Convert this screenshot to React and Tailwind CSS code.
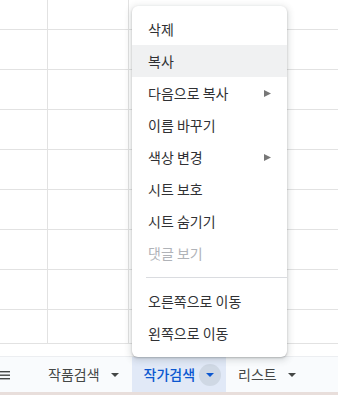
import React from 'react';

const items = [
    { label: '삭제' },
    { label: '복사', active: true },
    { label: '다음으로 복사', sub: true },
    { label: '이름 바꾸기' },
    { label: '색상 변경', sub: true },
    { label: '시트 보호' },
    { label: '시트 숨기기' },
    { label: '댓글 보기', disabled: true },
    { divider: true },
    { label: '오른쪽으로 이동' },
    { label: '왼쪽으로 이동' },
];

function Row({ h }) {
    return (
        <div className={`flex border-b border-[#e2e2e2] ${h}`}>
            <div className="w-[48px] border-r border-[#e2e2e2]"></div>
            <div className="w-[81px] border-r border-[#e2e2e2]"></div>
            <div className="flex-1"></div>
        </div>
    );
}

function Caret({ color }) {
    return (
        <svg width="8" height="4" viewBox="0 0 8 4">
            <path d="M0 0 L8 0 L4 4 Z" fill={color} />
        </svg>
    );
}

export default function App() {
    return (
        <div className="relative w-[338px] h-[395px] overflow-hidden bg-white" style={{ fontFamily: '"Noto Sans CJK KR", "Noto Sans", sans-serif' }}>
            {/* sheet grid */}
            <div className="flex flex-col">
                <Row h="h-[30px]" />
                <Row h="h-[40px]" />
                <Row h="h-[40px]" />
                <Row h="h-[40px]" />
                <Row h="h-[40px]" />
                <Row h="h-[40px]" />
                <Row h="h-[40px]" />
                <Row h="h-[40px]" />
                <Row h="h-[34px]" />
                <div className="h-[12px]"></div>
            </div>

            {/* tab bar */}
            <div className="flex h-[36px] items-center bg-[#f9fbfd] border-t border-[#eceef1] text-[14px] text-[#444746]">
                <div className="w-[36px] h-full flex items-center">
                    <svg width="10" height="10" viewBox="0 0 10 10">
                        <rect x="0" y="1" width="10" height="1.4" fill="#444746" />
                        <rect x="0" y="4.5" width="10" height="1.4" fill="#444746" />
                        <rect x="0" y="8" width="10" height="1.4" fill="#444746" />
                    </svg>
                </div>
                <div className="flex items-center h-full pl-3 pr-[6px] gap-[4px]">
                    <span>작품검색</span>
                    <span className="w-[22px] h-[22px] flex items-center justify-center"><Caret color="#444746" /></span>
                </div>
                <div className="flex items-center h-full pl-3 pr-[5px] gap-[4px] bg-[#e1e9f7] text-[#0b57d0] font-medium">
                    <span>작가검색</span>
                    <span className="w-[22px] h-[22px] rounded-full bg-[#cfd8e4] flex items-center justify-center"><Caret color="#0b57d0" /></span>
                </div>
                <div className="flex items-center h-full pl-3 gap-[4px]">
                    <span>리스트</span>
                    <span className="w-[22px] h-[22px] flex items-center justify-center"><Caret color="#444746" /></span>
                </div>
            </div>
            <div className="h-[3px] bg-[#e8dedb]"></div>

            {/* context menu */}
            <div className="absolute left-[132px] top-[6px] w-[155px] bg-white rounded-[6px] pt-[7px] pb-[8px] shadow-[0_2px_6px_2px_rgba(60,64,67,0.15),0_1px_2px_rgba(60,64,67,0.3)] text-[14px] text-[#303134]">
                {items.map((item, i) =>
                    item.divider ? (
                        <div key={i} className="h-[16px] flex items-center pl-[14px]">
                            <div className="h-px w-full bg-[#dadce0]"></div>
                        </div>
                    ) : (
                        <div key={i} className={`h-[32px] flex items-center justify-between pl-4 pr-4 ${item.active ? 'bg-[#f0f1f2]' : ''} ${item.disabled ? 'text-[#b0b3b8]' : ''}`}>
                            <span>{item.label}</span>
                            {item.sub && (
                                <svg width="7" height="7" viewBox="0 0 7 7">
                                    <path d="M0 0 L7 3.5 L0 7 Z" fill="#777" />
                                </svg>
                            )}
                        </div>
                    )
                )}
            </div>
        </div>
    );
}
